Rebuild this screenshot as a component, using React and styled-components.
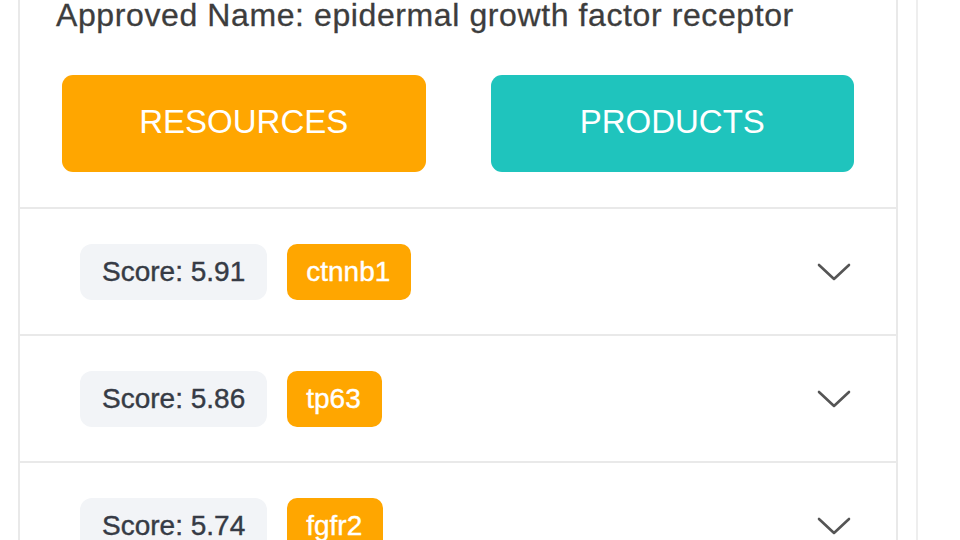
import React from "react";
import styled, { createGlobalStyle } from "styled-components";

const genes = [
  { score: "5.91", name: "ctnnb1" },
  { score: "5.86", name: "tp63" },
  { score: "5.74", name: "fgfr2" },
];

export default function App() {
  return (
    <>
      <GlobalStyle />
      <Page>
        <Panel>
          <Header>
            <ApprovedName>Approved Name: epidermal growth factor receptor</ApprovedName>
            <Buttons>
              <ActionButton $color="#ffa600">RESOURCES</ActionButton>
              <ActionButton $color="#1fc4bd">PRODUCTS</ActionButton>
            </Buttons>
          </Header>
          {genes.map((g) => (
            <Row key={g.name}>
              <Pills>
                <ScorePill>Score: {g.score}</ScorePill>
                <GeneTag>{g.name}</GeneTag>
              </Pills>
              <Chevron viewBox="0 0 34 20">
                <path d="M2 3 L17 17 L32 3" />
              </Chevron>
            </Row>
          ))}
        </Panel>
      </Page>
    </>
  );
}

const GlobalStyle = createGlobalStyle`
  body {
    margin: 0;
    background: #fff;
    font-family: "Liberation Sans", Arial, sans-serif;
    overflow: hidden;
  }
`;

const Page = styled.div`
  width: 916px;
  height: 540px;
  border-right: 2px solid #eeeeee;
  overflow: hidden;
`;

const Panel = styled.div`
  margin-left: 18px;
  width: 876px;
  border-left: 2px solid #e9e9e9;
  border-right: 2px solid #e9e9e9;
`;

const Header = styled.div`
  padding: 0 42px 35px 42px;
  border-bottom: 2px solid #e9e9e9;
`;

const ApprovedName = styled.div`
  font-size: 32px;
  line-height: 30px;
  letter-spacing: 0.6px;
  color: #3d3d3d;
  -webkit-text-stroke: 0.3px #3d3d3d;
  margin-left: -6px;
  margin-bottom: 45px;
  white-space: nowrap;
`;

const Buttons = styled.div`
  display: grid;
  grid-template-columns: 1fr 1fr;
  gap: 65px;
`;

const ActionButton = styled.button`
  height: 97px;
  border: none;
  border-radius: 11px;
  background: ${(p) => p.$color};
  color: #fff;
  font-family: "Liberation Sans", Arial, sans-serif;
  font-size: 33px;
  padding: 0 0 3px 0;
`;

const Row = styled.div`
  height: 125px;
  display: flex;
  align-items: center;
  justify-content: space-between;
  padding: 0 45px 0 60px;
  border-bottom: 2px solid #e9e9e9;
`;

const Pills = styled.div`
  display: flex;
  gap: 20px;
`;

const ScorePill = styled.span`
  height: 56px;
  display: flex;
  align-items: center;
  padding: 0 22px;
  background: #f2f4f7;
  border-radius: 12px;
  font-size: 28px;
  color: #363b45;
  -webkit-text-stroke: 0.4px #363b45;
`;

const GeneTag = styled.span`
  height: 56px;
  display: flex;
  align-items: center;
  padding: 0 21px 0 19px;
  background: #ffa600;
  border-radius: 10px;
  font-size: 28px;
  color: #fff;
  -webkit-text-stroke: 0.4px #fff;
`;

const Chevron = styled.svg`
  width: 34px;
  height: 20px;
  fill: none;
  stroke: #555;
  stroke-width: 2.6;
  stroke-linecap: round;
  stroke-linejoin: round;
`;
